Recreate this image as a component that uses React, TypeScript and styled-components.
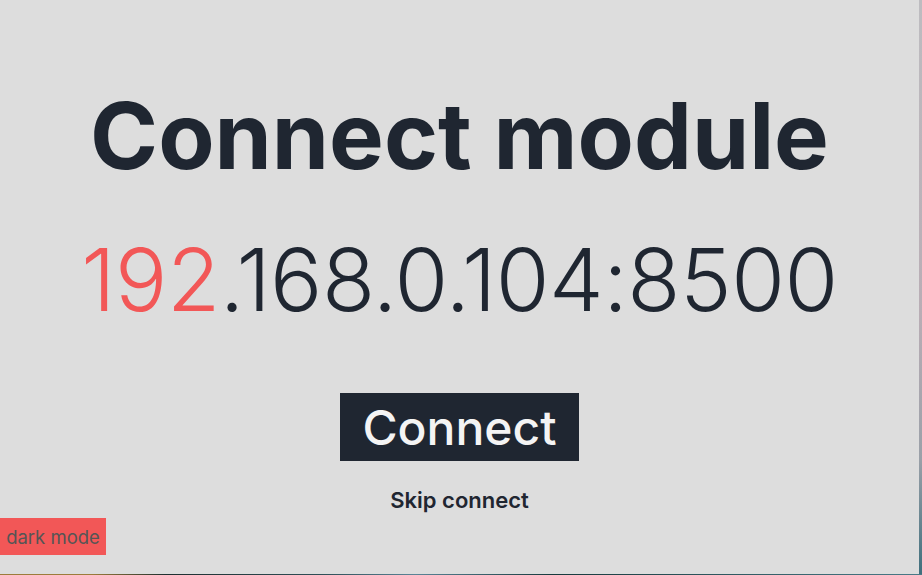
import React from "react";
import styled, { createGlobalStyle } from "styled-components";

const Global = createGlobalStyle`
  html, body { margin: 0; padding: 0; }
  body {
    width: 922px;
    height: 575px;
    overflow: hidden;
    background: #b9b7bb;
  }
`;

const Wallpaper = styled.div`
  width: 922px;
  height: 575px;
  display: flex;
  flex-direction: column;
`;

const Row = styled.div`
  display: flex;
  height: 574px;
`;

const RightStrip = styled.div`
  flex: 1;
  background: linear-gradient(180deg, #bdbcc0 0%, #b9adb5 55%, #9aa0a8 80%, #3f6f7d 100%);
`;

const BottomStrip = styled.div`
  flex: 1;
  background: linear-gradient(90deg, #9c7c3a 0%, #9c7c3a 10%, #1d2f30 18%, #2f4f57 35%, #5b8597 45%, #173a3d 60%, #4a7b88 100%);
`;

const Panel = styled.main`
  position: relative;
  width: 919px;
  height: 574px;
  background: #dddddd;
  display: flex;
  flex-direction: column;
  align-items: center;
  box-sizing: border-box;
  padding-top: 86px;
  font-family: Inter, "Liberation Sans", sans-serif;
  color: #1f2631;
`;

const Title = styled.h1`
  margin: 0;
  font-size: 92px;
  line-height: 100px;
  font-weight: 700;
  letter-spacing: 0;
`;

const Address = styled.div`
  margin-top: 44px;
  font-size: 87px;
  line-height: 100px;
  font-weight: 300;
  letter-spacing: -0.5px;
`;

const Accent = styled.span`
  color: #f25757;
`;

const ConnectButton = styled.button`
  margin-top: 63px;
  width: 239px;
  height: 68px;
  border: none;
  background: #1f2631;
  color: #f4f4f4;
  font-family: Inter, "Liberation Sans", sans-serif;
  font-size: 48px;
  font-weight: 500;
  padding: 0;
  cursor: pointer;
`;

const SkipLink = styled.div`
  margin-top: 26px;
  font-size: 22px;
  font-weight: 600;
  color: #1f2631;
`;

const DarkToggle = styled.button`
  position: absolute;
  left: 0;
  top: 518px;
  width: 106px;
  height: 37px;
  border: none;
  background: #f25757;
  color: #555555;
  font-family: Inter, "Liberation Sans", sans-serif;
  font-size: 18.5px;
  padding: 0;
`;

export default function App() {
  return (
    <>
      <Global />
      <Wallpaper>
        <Row>
          <Panel>
            <Title>Connect module</Title>
            <Address>
              <Accent>192</Accent>.168.0.104:8500
            </Address>
            <ConnectButton>Connect</ConnectButton>
            <SkipLink>Skip connect</SkipLink>
            <DarkToggle>dark mode</DarkToggle>
          </Panel>
          <RightStrip />
        </Row>
        <BottomStrip />
      </Wallpaper>
    </>
  );
}
